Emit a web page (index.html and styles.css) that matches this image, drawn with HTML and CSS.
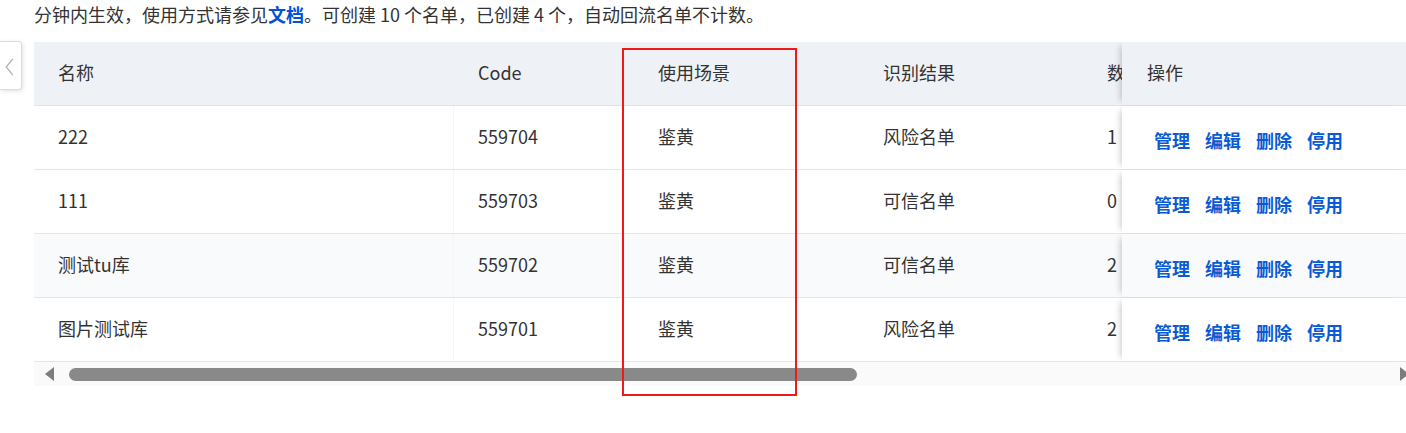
FILE: index.html
```html
<!DOCTYPE html>
<html lang="zh-CN">
<head>
<meta charset="utf-8">
<title>名单列表</title>
<link rel="stylesheet" href="styles.css">
</head>
<body>
<div class="page">
  <p class="intro">分钟内生效，使用方式请参见<a class="doc-link" href="#">文档</a>。可创建 10 个名单，已创建 4 个，自动回流名单不计数。</p>
  <div class="table-area">
    <button class="collapse" type="button" aria-label="收起">
      <svg width="22" height="48" viewBox="0 0 22 48"><path d="M13.5 16.5 L6.5 25 L13.5 33.5" fill="none" stroke="#b3b3b3" stroke-width="1.4"/></svg>
    </button>
    <div class="table">
      <div class="row head">
        <div class="cell">名称</div>
        <div class="cell">Code</div>
        <div class="cell">使用场景</div>
        <div class="cell">识别结果</div>
        <div class="cell clip">数量</div>
        <div class="cell op">操作</div>
      </div>
      <div class="row">
        <div class="cell">222</div>
        <div class="cell">559704</div>
        <div class="cell">鉴黄</div>
        <div class="cell">风险名单</div>
        <div class="cell clip">1</div>
        <div class="cell op"><div class="links"><a href="#">管理</a><a href="#">编辑</a><a href="#">删除</a><a href="#">停用</a></div></div>
      </div>
      <div class="row">
        <div class="cell">111</div>
        <div class="cell">559703</div>
        <div class="cell">鉴黄</div>
        <div class="cell">可信名单</div>
        <div class="cell clip">0</div>
        <div class="cell op"><div class="links"><a href="#">管理</a><a href="#">编辑</a><a href="#">删除</a><a href="#">停用</a></div></div>
      </div>
      <div class="row striped">
        <div class="cell">测试tu库</div>
        <div class="cell">559702</div>
        <div class="cell">鉴黄</div>
        <div class="cell">可信名单</div>
        <div class="cell clip">2</div>
        <div class="cell op"><div class="links"><a href="#">管理</a><a href="#">编辑</a><a href="#">删除</a><a href="#">停用</a></div></div>
      </div>
      <div class="row">
        <div class="cell">图片测试库</div>
        <div class="cell">559701</div>
        <div class="cell">鉴黄</div>
        <div class="cell">风险名单</div>
        <div class="cell clip">2</div>
        <div class="cell op"><div class="links"><a href="#">管理</a><a href="#">编辑</a><a href="#">删除</a><a href="#">停用</a></div></div>
      </div>
      <div class="scrollbar">
        <span class="arrow left"></span>
        <span class="thumb"></span>
        <span class="arrow right"></span>
      </div>
    </div>
    <div class="highlight"></div>
  </div>
</div>
</body>
</html>
```

FILE: styles.css
```css
* { box-sizing: border-box; }
html, body { margin: 0; padding: 0; background: #fff; }
body {
  font-family: "Noto Sans CJK SC", "Liberation Sans", sans-serif;
  font-size: 18px;
  color: #333;
  overflow: hidden;
  width: 1406px;
  height: 433px;
}
.page { position: relative; }
.intro {
  margin: 0;
  padding-left: 34px;
  height: 28px;
  line-height: 28px;
  white-space: nowrap;
  color: #333;
}
.doc-link { color: #0052d9; font-weight: 700; text-decoration: none; }

.table-area {
  position: relative;
  margin-top: 14px;
  padding-left: 34px;
}
.collapse {
  position: absolute;
  left: 0;
  top: -1px;
  width: 22px;
  height: 49px;
  padding: 0;
  border: 1px solid #dcdcdc;
  border-left: none;
  border-radius: 0 4px 4px 0;
  background: #fff;
  box-shadow: 1px 1px 4px rgba(0,0,0,0.12);
  display: flex;
  align-items: center;
  justify-content: center;
  z-index: 3;
}
.collapse svg { display: block; }

.table { width: 1372px; overflow: hidden; }
.row {
  display: grid;
  grid-template-columns: 420px 180px 225px 224px 39px 1fr;
  height: 64px;
  border-bottom: 1px solid #e3e5e8;
  background: #fff;
}
.row.head { height: 64px; background: #eef1f6; border-bottom-color: #dfe2e6; }
.row.striped { background: #f9fafc; }
.cell {
  padding-left: 24px;
  padding-bottom: 3px;
  display: flex;
  align-items: center;
  white-space: nowrap;
  line-height: 24px;
}
.row:not(.head) .cell:first-child { border-right: 1px solid #f5f5f5; }
.cell.clip { overflow: hidden; }
.cell.op {
  position: relative;
  background: inherit;
  box-shadow: -6px 0 6px -4px rgba(0,0,0,0.18);
  padding-left: 25px;
  z-index: 1;
}
.links {
  display: flex;
  gap: 15px;
  padding-left: 7px;
  padding-top: 8px;
}
.links a {
  color: #0a5bd3;
  font-weight: 700;
  text-decoration: none;
}

.scrollbar {
  position: relative;
  height: 24px;
  background: #fafafa;
  display: flex;
  align-items: center;
  padding-left: 11px;
}
.arrow { width: 0; height: 0; border-top: 7px solid transparent; border-bottom: 7px solid transparent; }
.arrow.left { border-right: 9px solid #7d7d7d; }
.arrow.right { position: absolute; right: -3px; top: 5px; border-left: 9px solid #7d7d7d; }
.thumb {
  margin-left: 15px;
  width: 788px;
  height: 13px;
  border-radius: 7px;
  background: #898989;
}

.highlight {
  position: absolute;
  left: 622px;
  top: 6px;
  width: 175px;
  height: 348px;
  border: 2px solid #f01919;
  z-index: 4;
  pointer-events: none;
}
```
